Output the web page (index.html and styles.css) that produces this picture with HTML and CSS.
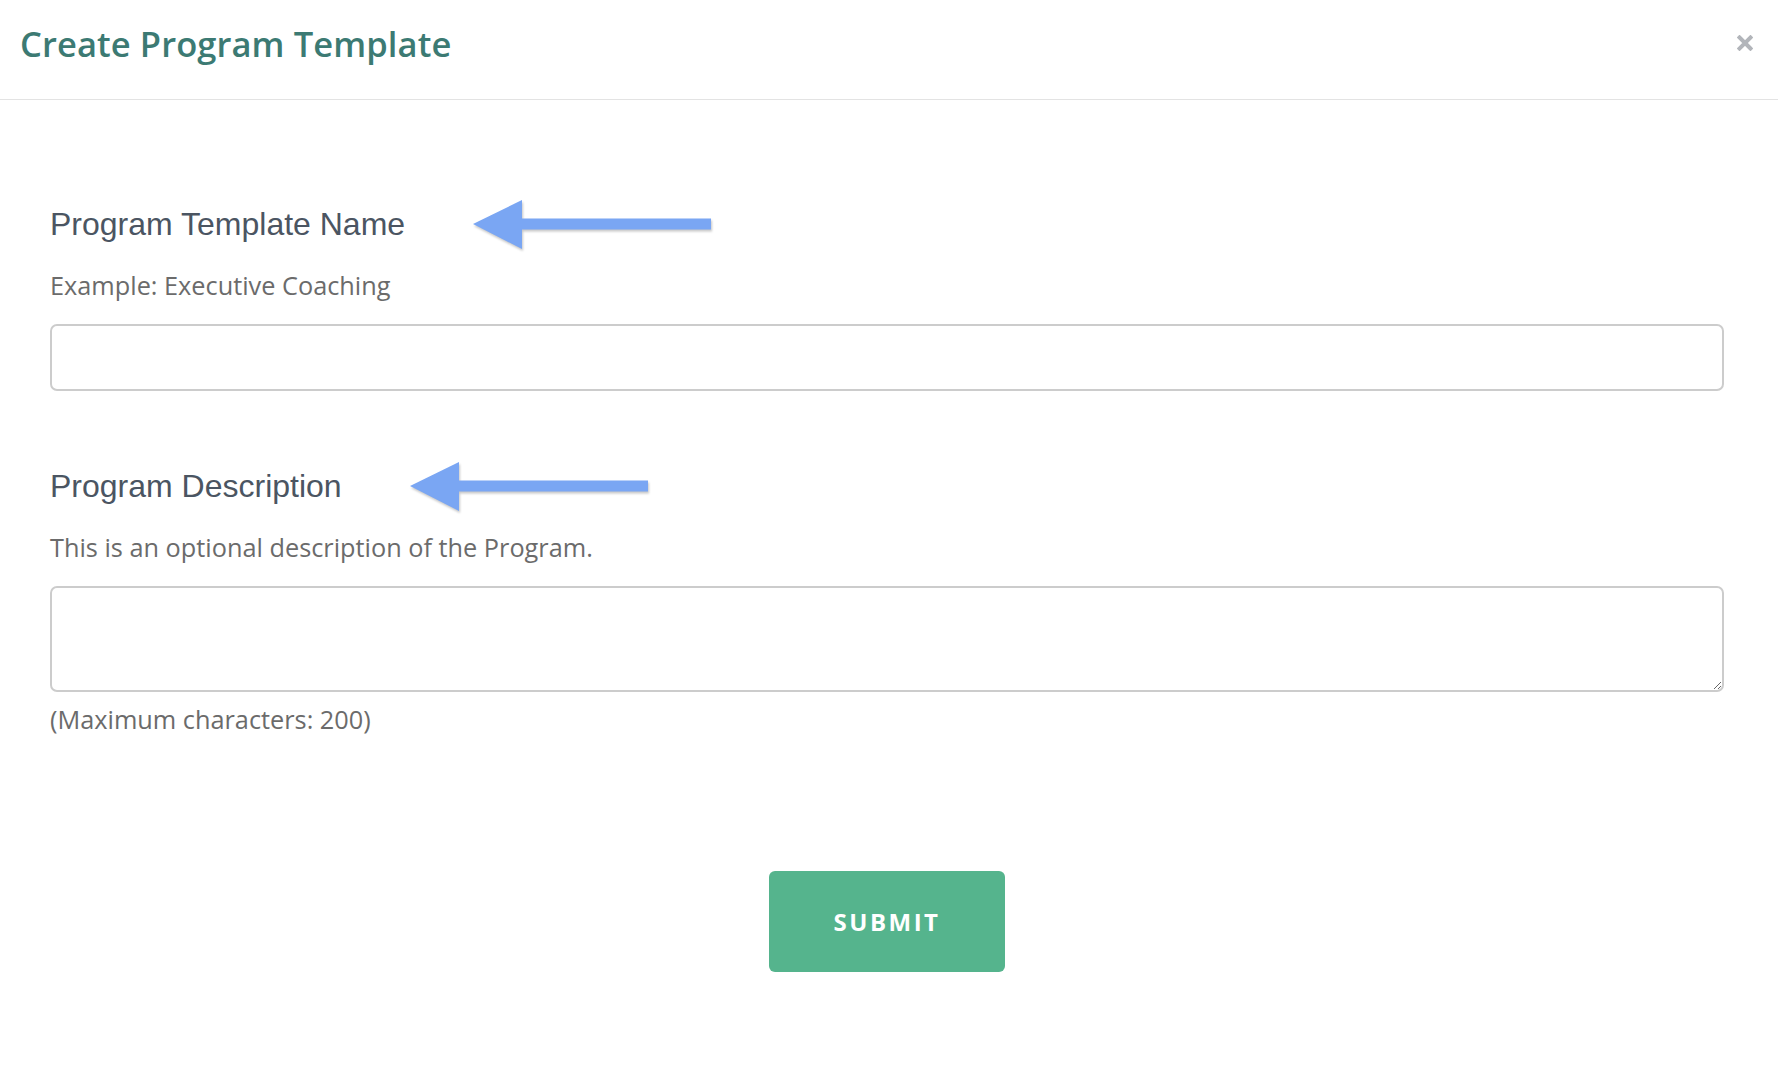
FILE: index.html
```html
<!DOCTYPE html>
<html lang="en">
  <head>
    <meta charset="UTF-8" />
    <meta name="viewport" content="width=device-width, initial-scale=1.0" />
    <title>Create Program Template</title>
    <link rel="stylesheet" href="styles.css">
  </head>
  <body>
    <div class="modal">
      <header class="modal-header">
        <h1>Create Program Template</h1>
        <button class="close-button" type="button" aria-label="Close">
          <svg width="16" height="16" viewBox="0 0 16 16">
            <path d="M2.5 2.5 L13.5 13.5 M13.5 2.5 L2.5 13.5" />
          </svg>
        </button>
      </header>

      <form class="modal-body" onsubmit="return false">
        <div class="field">
          <div class="label-row">
            <label for="template-name">Program Template Name</label>
            <!-- pointer arrow -->
            <svg class="arrow" width="242" height="54" viewBox="0 0 242 54">
              <polygon points="0,25 49,1 49,50" />
              <rect x="48" y="19.5" width="190" height="11" />
            </svg>
          </div>
          <p class="hint">Example: Executive Coaching</p>
          <input type="text" id="template-name" />
        </div>

        <div class="field">
          <div class="label-row">
            <label for="template-description">Program Description</label>
            <svg class="arrow" width="242" height="54" viewBox="0 0 242 54">
              <polygon points="0,25 49,1 49,50" />
              <rect x="48" y="19.5" width="190" height="11" />
            </svg>
          </div>
          <p class="hint">This is an optional description of the Program.</p>
          <textarea id="template-description" maxlength="200"></textarea>
          <p class="hint max-chars">(Maximum characters: 200)</p>
        </div>

        <div class="actions">
          <button class="submit-button" type="submit">SUBMIT</button>
        </div>
      </form>
    </div>
  </body>
</html>
```

FILE: styles.css
```css
body {
  margin: 0;
  padding: 0;
  background: #fff;
  font-family: "Open Sans", "Noto Sans", sans-serif;
}

.modal {
  min-height: 100vh;
  background: #fff;
}

/* Header */
.modal-header {
  display: flex;
  justify-content: space-between;
  align-items: flex-start;
  height: 100px;
  box-sizing: border-box;
  padding: 20px 25px 0 20px;
  border-bottom: 1px solid #e3e3e3;
}

.modal-header h1 {
  margin: 0;
  font-size: 34.5px;
  line-height: 48px;
  font-weight: 600;
  color: #3c7a73;
  letter-spacing: 0.1px;
}

.close-button {
  margin-top: 15px;
  padding: 0;
  border: none;
  background: none;
  cursor: pointer;
  line-height: 0;
}

.close-button path {
  stroke: #b2b5ba;
  stroke-width: 4;
  stroke-linecap: square;
  fill: none;
}

/* Form body */
.modal-body {
  padding: 98px 54px 0 50px;
}

.field + .field {
  margin-top: 69px;
}

.label-row {
  display: flex;
  align-items: center;
  height: 52px;
}

.label-row label {
  font-family: "Liberation Sans", Arial, sans-serif;
  font-size: 32px;
  line-height: 36px;
  color: #4b5562;
}

.arrow {
  margin-left: 68px;
  margin-top: 4px;
  filter: drop-shadow(1px 2px 1px rgba(0, 0, 0, 0.22));
}

.arrow polygon,
.arrow rect {
  fill: #7aa6f3;
}

.hint {
  margin: 20px 0 24px;
  font-size: 25.3px;
  line-height: 30px;
  color: #6b6b6b;
}

input[type="text"],
textarea {
  display: block;
  width: 100%;
  box-sizing: border-box;
  border: 2px solid #cccccc;
  border-radius: 7px;
  background: #fff;
  font-family: inherit;
  font-size: 22px;
  padding: 10px 14px;
}

input[type="text"] {
  height: 67px;
}

textarea {
  height: 106px;
  resize: vertical;
}

.hint.max-chars {
  margin: 12px 0 0;
}

/* Submit */
.actions {
  display: flex;
  justify-content: center;
  padding-top: 137px;
}

.submit-button {
  width: 236px;
  height: 101px;
  border: none;
  border-radius: 6px;
  background-color: #55b48d;
  color: #fff;
  font-family: inherit;
  font-size: 24px;
  font-weight: 700;
  letter-spacing: 2.5px;
  cursor: pointer;
}

.submit-button:hover {
  background-color: #49a47f;
}
```
